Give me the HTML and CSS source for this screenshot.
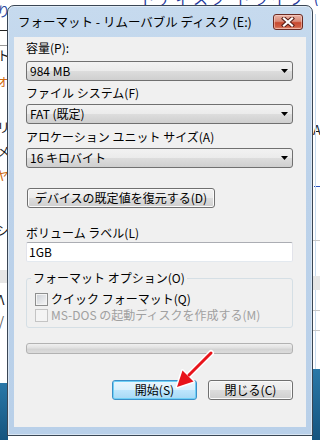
FILE: index.html
```html
<!DOCTYPE html>
<html lang="ja">
<head>
<meta charset="utf-8">
<title>フォーマット</title>
<link rel="stylesheet" href="styles.css">
</head>
<body>
<div class="screen">
  <div class="bgwin">
    <div class="topstrip"><span class="top-text">ードディスク ドライブ (1)</span></div>
    <span class="frag f1">り</span>
    <span class="hline h1"></span>
    <span class="hline h2"></span>
    <span class="frag f2">ト</span>
    <span class="frag f3 orange">ォ</span>
    <span class="frag f4">リ</span>
    <span class="frag f5">メ</span>
    <span class="frag f6 orange">ヤ</span>
    <span class="frag f7">シ</span>
    <span class="band b1"></span>
    <span class="frag f8">Λ</span>
    <span class="frag f9">/</span>
    <span class="frag r1">A</span>
    <span class="rline r2"></span>
    <span class="vline"></span>
    <span class="hline rh1"></span>
    <span class="band rb1"></span>
    <span class="hline rh2"></span>
    <span class="hline rh3"></span>
  </div>
  <div class="desk desk-left"></div>
  <div class="desk desk-right"></div>

  <div class="dialog">
    <div class="titlebar">
      <span class="title">フォーマット - リムーバブル ディスク (E:)</span>
      <span class="close">
        <svg width="14" height="10" viewBox="0 0 14 10">
          <path d="M3 1.5 L11 8.5 M11 1.5 L3 8.5" stroke="#5a1f17" stroke-width="4.2" stroke-linecap="square" fill="none"/>
          <path d="M3 1.5 L11 8.5 M11 1.5 L3 8.5" stroke="#ffffff" stroke-width="2.2" stroke-linecap="square" fill="none"/>
        </svg>
      </span>
    </div>
    <div class="client">
      <div class="label l-cap">容量(P):</div>
      <div class="combo c-cap"><span>984 MB</span><svg class="arrow" width="7" height="4" viewBox="0 0 7 4"><polygon points="0,0 7,0 3.5,4" fill="#000"/></svg></div>

      <div class="label l-fs">ファイル システム(F)</div>
      <div class="combo c-fs"><span>FAT (既定)</span><svg class="arrow" width="7" height="4" viewBox="0 0 7 4"><polygon points="0,0 7,0 3.5,4" fill="#000"/></svg></div>

      <div class="label l-alloc">アロケーション ユニット サイズ(A)</div>
      <div class="combo c-alloc"><span>16 キロバイト</span><svg class="arrow" width="7" height="4" viewBox="0 0 7 4"><polygon points="0,0 7,0 3.5,4" fill="#000"/></svg></div>

      <button class="btn restore">デバイスの既定値を復元する(D)</button>

      <div class="label l-vol">ボリューム ラベル(L)</div>
      <div class="textbox">1GB</div>

      <fieldset class="group">
        <legend>フォーマット オプション(O)</legend>
        <div class="check-row"><span class="checkbox"></span><span>クイック フォーマット(Q)</span></div>
        <div class="check-row disabled"><span class="checkbox"></span><span>MS-DOS の起動ディスクを作成する(M)</span></div>
      </fieldset>

      <div class="progress"></div>

      <div class="actions">
        <button class="btn primary">開始(S)</button>
        <button class="btn">閉じる(C)</button>
      </div>
    </div>
  </div>

  <svg class="pointer" width="320" height="440" viewBox="0 0 320 440">
    <line x1="211" y1="353" x2="189" y2="375" stroke="#ffffff" stroke-width="6" stroke-linecap="round"/>
    <polygon points="177,387 182.5,370.5 193.5,381.5" fill="#ffffff" stroke="#ffffff" stroke-width="3" stroke-linejoin="round"/>
    <line x1="211" y1="353" x2="189" y2="375" stroke="#e8141b" stroke-width="3" stroke-linecap="round"/>
    <polygon points="177,387 182.5,370.5 193.5,381.5" fill="#e8141b"/>
  </svg>
</div>
</body>
</html>
```

FILE: styles.css
```css
* { box-sizing: border-box; }

html, body {
  margin: 0;
  padding: 0;
}

body {
  width: 320px;
  height: 440px;
  overflow: hidden;
  background: #ffffff;
  font-family: "Noto Sans CJK JP", "Noto Sans", sans-serif;
  font-size: 12px;
  color: #000;
}

.screen {
  position: relative;
  width: 320px;
  height: 440px;
  overflow: hidden;
  background: #ffffff;
}

/* background window fragments */
.bgwin {
  position: absolute;
  inset: 0;
  background: #ffffff;
}

.topstrip {
  position: absolute;
  left: 110px;
  top: 0;
  width: 210px;
  height: 6px;
  overflow: hidden;
}

.top-text {
  position: absolute;
  left: 12px;
  top: -10px;
  color: #1e3aa0;
  font-size: 15px;
  line-height: 16px;
  letter-spacing: 3px;
  white-space: nowrap;
}

.frag {
  position: absolute;
  font-size: 13px;
  line-height: 16px;
  color: #1b1b1b;
}

.orange { color: #d06a10; }

.f1 { left: -3px; top: 3px; color: #2a4aa0; }
.f2 { left: -3px; top: 47px; }
.f3 { left: -4px; top: 72px; }
.f4 { left: -3px; top: 119px; }
.f5 { left: -3px; top: 143px; }
.f6 { left: -4px; top: 167px; }
.f7 { left: -4px; top: 222px; }
.f8 { left: -3px; top: 292px; }
.f9 { left: -1px; top: 313px; color: #555; }
.r1 { left: 313px; top: 122px; }

.hline {
  position: absolute;
  height: 1px;
  background: #222;
}
.h1 { left: 0; width: 8px; top: 30px; }
.h2 { left: 0; width: 8px; top: 45px; background: #999; }
.rh1 { left: 313px; width: 7px; top: 240px; background: #c8c8c8; }
.rh2 { left: 313px; width: 7px; top: 310px; background: #c8c8c8; }
.rh3 { left: 313px; width: 7px; top: 330px; background: #c8c8c8; }

.vline {
  position: absolute;
  left: 315px;
  top: 14px;
  width: 1px;
  height: 355px;
  background: #c9dcef;
}

.rline {
  position: absolute;
  left: 314px;
  top: 186px;
  width: 6px;
  height: 1px;
  background: #2b54c0;
}

.band {
  position: absolute;
  background: #e6e6e6;
}
.b1 { left: 0; width: 8px; top: 270px; height: 13px; }
.rb1 { left: 313px; width: 7px; top: 276px; height: 14px; }

.desk {
  position: absolute;
  background: linear-gradient(#2a78a8, #15547f);
}
.desk-left { left: 0; top: 383px; width: 8px; height: 57px; }
.desk-right { left: 312px; top: 369px; width: 8px; height: 71px; }

/* dialog window */
.dialog {
  position: absolute;
  left: 7px;
  top: 5px;
  width: 306px;
  height: 431px;
  border: 1px solid #3a4654;
  border-radius: 7px 7px 0 0;
  background: linear-gradient(#c6daee 0%, #bcd2ea 40%, #b9d0e9 100%);
  box-shadow: inset 0 0 0 1px rgba(255,255,255,0.45);
  padding: 0 6px 8px 6px;
  display: flex;
  flex-direction: column;
}

.titlebar {
  height: 31px;
  flex: none;
  display: flex;
  align-items: center;
  justify-content: space-between;
  padding: 0 3px 0 4px;
}

.title {
  font-size: 12.5px;
  line-height: 16px;
  color: #000;
  white-space: nowrap;
}

.close {
  width: 30px;
  height: 16px;
  border: 1px solid #6b2a22;
  border-radius: 3px;
  background: linear-gradient(#eab3a6 0%, #d98a78 45%, #c8492f 55%, #cf5f45 85%, #e39a82 100%);
  box-shadow: inset 0 0 0 1px rgba(255,220,210,0.5);
  display: flex;
  align-items: center;
  justify-content: center;
}

.close svg { display: block; }

.client {
  flex: 1;
  background: #f0f0f0;
  padding: 3px 13px 0 12px;
  display: flex;
  flex-direction: column;
}

.label {
  height: 16px;
  line-height: 16px;
  white-space: nowrap;
}

.l-fs { margin-top: 4px; }
.l-alloc { margin-top: 5px; }
.l-vol { margin-top: 17px; }

.combo {
  height: 20px;
  border: 1px solid #707070;
  border-radius: 3px;
  background: linear-gradient(#f2f2f2 0%, #ebebeb 50%, #dddddd 50%, #cfcfcf 100%);
  display: flex;
  align-items: center;
  justify-content: space-between;
  padding: 0 4px 0 3px;
  line-height: 16px;
}

.c-cap { margin-top: 5px; }
.c-fs { margin-top: 3px; }
.c-alloc { margin-top: 3px; }

.arrow { display: block; }

.btn {
  font-family: inherit;
  font-size: 12px;
  color: #000;
  height: 20px;
  line-height: 16px;
  padding: 0;
  border: 1px solid #707070;
  border-radius: 3px;
  background: linear-gradient(#f2f2f2 0%, #ebebeb 50%, #dddddd 50%, #cfcfcf 100%);
  box-shadow: inset 0 0 0 1px #fbfbfb;
}

.restore {
  margin-top: 20px;
  margin-left: 1px;
  width: 188px;
}

.textbox {
  margin-top: 1px;
  height: 20px;
  line-height: 18px;
  padding-left: 2px;
  background: #ffffff;
  border: 1px solid #e2e3ea;
  border-top-color: #abadb3;
  border-bottom-color: #e3e9ef;
  border-radius: 2px;
}

.group {
  margin: 8px 0 0 0;
  padding: 5px 0 4px 8px;
  border: 1px solid #d5dfe5;
  border-radius: 3px;
  min-width: 0;
}

.group legend {
  padding: 0 2px;
  margin-left: -4px;
  line-height: 16px;
  height: 16px;
  font-size: 12px;
}

.check-row {
  display: flex;
  align-items: center;
  gap: 3px;
  height: 16px;
  line-height: 16px;
  white-space: nowrap;
}

.checkbox {
  width: 13px;
  height: 13px;
  border: 1px solid #8e8f8f;
  background: linear-gradient(135deg, #cbcfd5, #f7f7f7);
  box-shadow: inset 0 0 0 1px #f4f4f4;
  flex: none;
}

.check-row.disabled { color: #a0a0a0; }
.check-row.disabled .checkbox {
  border-color: #c4c4c4;
  background: #f4f4f4;
  box-shadow: none;
}

.progress {
  margin-top: 15px;
  height: 11px;
  border: 1px solid #b2b2b2;
  border-radius: 3px;
  background: linear-gradient(#f0f0f0 0%, #e2e2e2 40%, #d4d4d4 60%, #dcdcdc 100%);
}

.actions {
  margin-top: 26px;
  display: flex;
  justify-content: flex-end;
  gap: 11px;
}

.actions .btn { width: 85px; }

.btn.primary {
  border-color: #3c8fc8;
  background: linear-gradient(#eaf6fd 0%, #d9f0fc 50%, #bee6fd 50%, #a7d9f5 100%);
  box-shadow: inset 0 0 0 1px #6fd0f6;
}

.pointer {
  position: absolute;
  left: 0;
  top: 0;
  pointer-events: none;
}
```
